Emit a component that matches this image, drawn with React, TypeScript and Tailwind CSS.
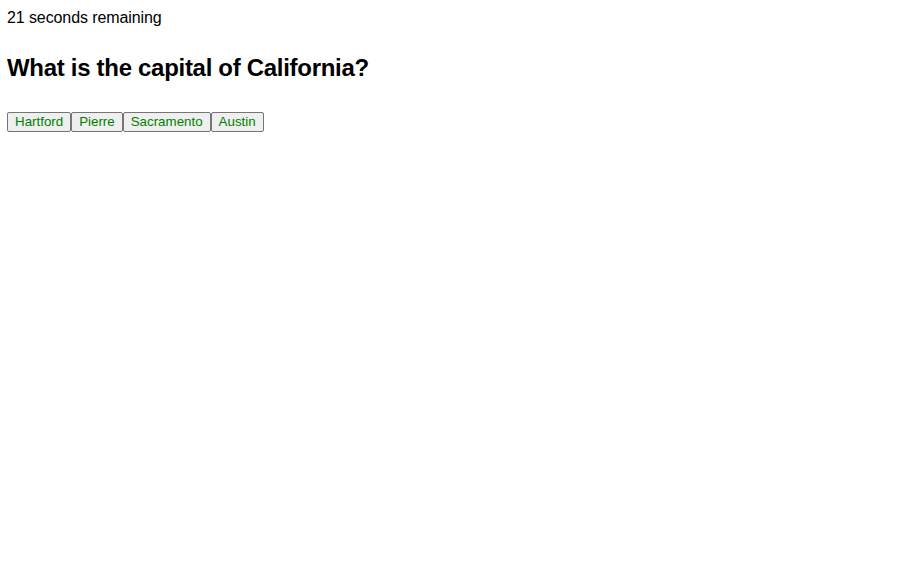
const answers = ["Hartford", "Pierre", "Sacramento", "Austin"];

export default function App() {
  return (
    <div className="min-h-[583px] bg-white pl-[7px] pt-[9px] text-black" style={{ fontFamily: '"Liberation Sans", Arial, sans-serif' }}>
      <div className="text-base leading-[18px] tracking-[-0.1px]">21 seconds remaining</div>
      <h2 className="mt-[27px] text-2xl font-bold leading-[28px] tracking-[-0.3px]">What is the capital of California?</h2>
      <div className="mt-[30px] flex">
        {answers.map((a) => (
          <button
            key={a}
            className="h-5 rounded-[2px] border border-[#767676] bg-[#efefef] px-[7px] text-[13.33px] leading-[16px] text-[#008000]"
          >
            {a}
          </button>
        ))}
      </div>
    </div>
  );
}
